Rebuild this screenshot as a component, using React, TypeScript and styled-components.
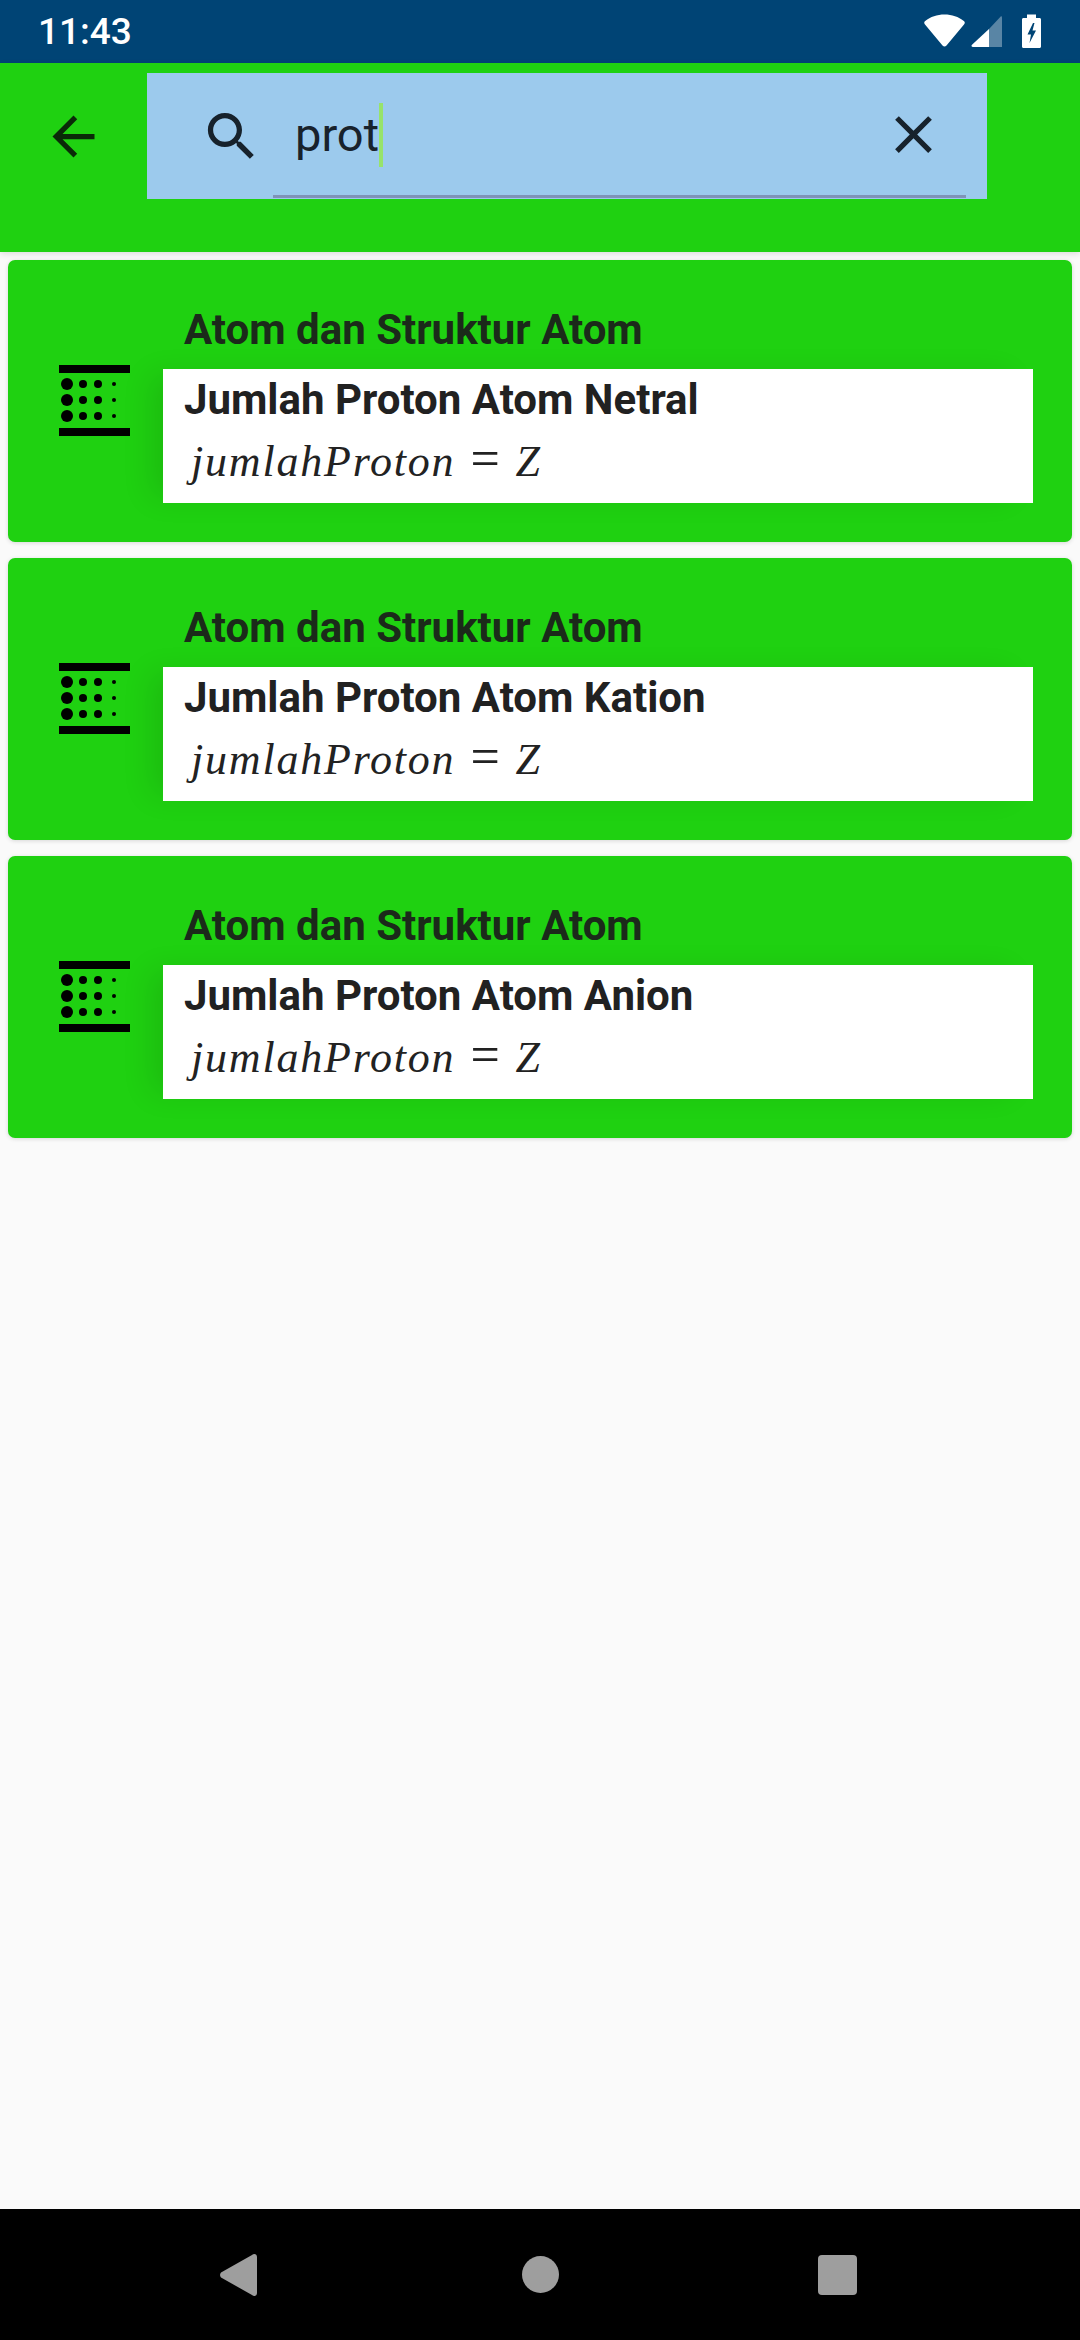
import React from 'react';
import styled, { createGlobalStyle } from 'styled-components';

const GlobalStyle = createGlobalStyle`
  html,
  body {
    margin: 0;
    padding: 0;
    background: #fafafa;
    font-family: Roboto, 'Liberation Sans', sans-serif;
  }
`;

const Page = styled.div`
  width: 1080px;
  height: 2340px;
  display: flex;
  flex-direction: column;
  background: #fafafa;
  overflow: hidden;
`;

const StatusBar = styled.div`
  height: 63px;
  flex: none;
  display: flex;
  align-items: center;
  justify-content: space-between;
  padding: 0 39px 0 38px;
  background: #004475;
  color: #fff;
`;
const Clock = styled.span`
  font-size: 37px;
  font-weight: 500;
  line-height: 63px;
`;
const StatusIcons = styled.div`
  display: flex;
  align-items: flex-start;
  height: 63px;
  padding-top: 14px;
  box-sizing: border-box;
`;
const WifiIcon = styled.svg`
  display: block;
  width: 41px;
  height: 33px;
`;
const SignalIcon = styled.svg`
  display: block;
  width: 31px;
  height: 31px;
  margin: 2px 20px 0 6px;
`;
const BatteryIcon = styled.svg`
  display: block;
  width: 19px;
  height: 34px;
`;

const Header = styled.div`
  height: 189px;
  flex: none;
  display: flex;
  padding: 10px 93px 53px 0;
  box-sizing: border-box;
  background: #1fd111;
  box-shadow: 0 2px 6px rgba(0, 0, 0, 0.12);
  position: relative;
`;
const BackSlot = styled.div`
  width: 147px;
  flex: none;
  display: flex;
  align-items: center;
  padding-left: 42px;
  box-sizing: border-box;
`;
const Glyph = styled.svg<{ $color: string }>`
  display: block;
  width: 63px;
  height: 63px;
  flex: none;
  fill: ${(p) => p.$color};
`;
const SearchBox = styled.div`
  flex: 1;
  display: flex;
  background: #9ccaed;
`;
const SearchSlot = styled.div`
  width: 126px;
  flex: none;
  display: flex;
  align-items: center;
  padding-left: 53px;
  box-sizing: border-box;
`;
const Field = styled.div`
  flex: 1;
  display: flex;
  align-items: center;
  justify-content: space-between;
  margin-right: 21px;
  padding: 0 21px 0 22px;
  border-bottom: 3px solid #7f93b8;
  margin-bottom: 1px;
`;
const Query = styled.div`
  display: flex;
  align-items: center;
  padding-top: 2px;
`;
const QueryText = styled.span`
  font-size: 47px;
  line-height: 66px;
  color: #18222c;
`;
const Caret = styled.span`
  width: 4px;
  height: 64px;
  background: #97e36b;
`;

const List = styled.div`
  flex: 1;
  display: flex;
  flex-direction: column;
  gap: 16px;
  padding: 8px 8px 0;
`;
const Card = styled.div`
  height: 282px;
  display: flex;
  background: #1fd111;
  border-radius: 7px;
  box-shadow: 0 1px 4px rgba(0, 0, 0, 0.14);
`;
const CardIconSlot = styled.div`
  width: 155px;
  flex: none;
  display: flex;
  align-items: center;
  padding: 0 0 2px 51px;
  box-sizing: border-box;
`;
const CardIcon = styled.svg`
  display: block;
  width: 71px;
  height: 71px;
`;
const CardBody = styled.div`
  flex: 1;
  display: flex;
  flex-direction: column;
  padding: 48px 39px 0 0;
`;
const Topic = styled.div`
  padding-left: 21px;
  margin-bottom: 17px;
  font-size: 42px;
  font-weight: 700;
  line-height: 44px;
  color: #1b2a1a;
`;
const Formula = styled.div`
  height: 134px;
  padding: 9px 0 0 21px;
  box-sizing: border-box;
  background: #fff;
  box-shadow: -18px 0 28px -6px rgba(0, 0, 0, 0.1);
`;
const FormulaName = styled.div`
  font-size: 42px;
  font-weight: 700;
  line-height: 44px;
  color: #212121;
`;
const MathLine = styled.div`
  display: flex;
  align-items: baseline;
  margin-top: 13px;
  padding-left: 7px;
  font-family: 'Liberation Serif', serif;
  font-style: italic;
  font-size: 44px;
  line-height: 48px;
  letter-spacing: 1.8px;
  color: #222;
`;
const MathEquals = styled.span`
  margin: 0 14px 0 15px;
  font-style: normal;
  font-size: 52px;
  line-height: 48px;
`;

const NavBar = styled.div`
  height: 131px;
  flex: none;
  display: grid;
  grid-template-columns: 302px 302px 292px;
  justify-items: center;
  align-items: center;
  padding-left: 87px;
  background: #000;
`;
const NavIcon = styled.svg<{ $w: number; $h: number }>`
  display: block;
  width: ${(p) => p.$w}px;
  height: ${(p) => p.$h}px;
  fill: #9e9e9e;
`;

const CARD_TITLES = [
  'Jumlah Proton Atom Netral',
  'Jumlah Proton Atom Kation',
  'Jumlah Proton Atom Anion',
];

// dots fade out from left to right, [cx, r] within the icon
const DOT_COLUMNS = [
  [8, 6],
  [24, 4],
  [39, 4],
  [55, 2],
];
const DOT_ROWS = [19, 35, 51];

function BlurIcon() {
  return (
    <CardIcon viewBox="0 0 71 71">
      <rect x="0" y="0" width="71" height="8" />
      <rect x="0" y="63" width="71" height="8" />
      {DOT_ROWS.map((cy) =>
        DOT_COLUMNS.map(([cx, r]) => <circle key={`${cx}-${cy}`} cx={cx} cy={cy} r={r} />)
      )}
    </CardIcon>
  );
}

export default function App() {
  return (
    <Page>
      <GlobalStyle />
      <StatusBar>
        <Clock>11:43</Clock>
        <StatusIcons>
          <WifiIcon viewBox="0 0 41 33">
            <path
              fill="#fff"
              d="M1 10.500C-0.200 9.300 0 8 1.200 7 6.500 2.800 13 0.500 20.500 0.500S34.500 2.800 39.800 7C41 8 41.200 9.300 40 10.500L22.500 31.500C21.300 32.800 19.700 32.800 18.500 31.500Z"
            />
          </WifiIcon>
          <SignalIcon viewBox="0 0 31 31">
            <path fill="#fff" d="M18 13V31H2C0.500 31 0 29.800 1 28.800Z" />
            <path fill="#fff" fillOpacity="0.35" d="M18 13L29.500 0.800C30.300 0 31 0.300 31 1.500V31H18Z" />
          </SignalIcon>
          <BatteryIcon viewBox="0 0 19 34">
            <path fill="#fff" d="M1.500 4H5V0.500H14V4H17.500C18.400 4 19 4.600 19 5.500V32.500C19 33.400 18.400 34 17.500 34H1.500C0.600 34 0 33.400 0 32.500V5.500C0 4.600 0.600 4 1.500 4Z" />
            <path fill="#004475" d="M11 9L5.500 20.500H9L7.500 29L14 16.500H10.500L12.500 9Z" />
          </BatteryIcon>
        </StatusIcons>
      </StatusBar>

      <Header>
        <BackSlot>
          <Glyph $color="#0a2a08" viewBox="0 0 24 24">
            <path d="M20 11H7.830l5.590-5.590L12 4l-8 8 8 8 1.410-1.410L7.830 13H20v-2z" />
          </Glyph>
        </BackSlot>
        <SearchBox>
          <SearchSlot>
            <Glyph $color="#17222c" viewBox="0 0 24 24">
              <path d="M15.500 14h-.79l-.28-.27C15.410 12.590 16 11.110 16 9.500 16 5.910 13.090 3 9.500 3S3 5.910 3 9.500 5.910 16 9.500 16c1.610 0 3.090-.59 4.230-1.570l.27.28v.79l5 4.990L20.490 19l-4.990-5zm-6 0C7.010 14 5 11.990 5 9.500S7.010 5 9.500 5 14 7.010 14 9.500 11.990 14 9.500 14z" />
            </Glyph>
          </SearchSlot>
          <Field>
            <Query>
              <QueryText>prot</QueryText>
              <Caret />
            </Query>
            <Glyph $color="#17222c" viewBox="0 0 24 24">
              <path d="M19 6.410L17.590 5 12 10.590 6.410 5 5 6.410 10.590 12 5 17.590 6.410 19 12 13.410 17.590 19 19 17.590 13.410 12z" />
            </Glyph>
          </Field>
        </SearchBox>
      </Header>

      <List>
        {CARD_TITLES.map((title) => (
          <Card key={title}>
            <CardIconSlot>
              <BlurIcon />
            </CardIconSlot>
            <CardBody>
              <Topic>Atom dan Struktur Atom</Topic>
              <Formula>
                <FormulaName>{title}</FormulaName>
                <MathLine>
                  jumlahProton<MathEquals>=</MathEquals>Z
                </MathLine>
              </Formula>
            </CardBody>
          </Card>
        ))}
      </List>

      <NavBar>
        <NavIcon $w={37} $h={42} viewBox="0 0 37 42">
          <path d="M1 23.500C-0.300 22.200 -0.300 19.800 1 18.500L32 1C34 -0.800 37 0 37 3V39C37 42 34 42.800 32 41Z" />
        </NavIcon>
        <NavIcon $w={37} $h={37} viewBox="0 0 37 37">
          <circle cx="18.500" cy="18.500" r="18.500" />
        </NavIcon>
        <NavIcon $w={39} $h={40} viewBox="0 0 39 40">
          <rect x="0" y="0" width="39" height="40" rx="4" />
        </NavIcon>
      </NavBar>
    </Page>
  );
}
